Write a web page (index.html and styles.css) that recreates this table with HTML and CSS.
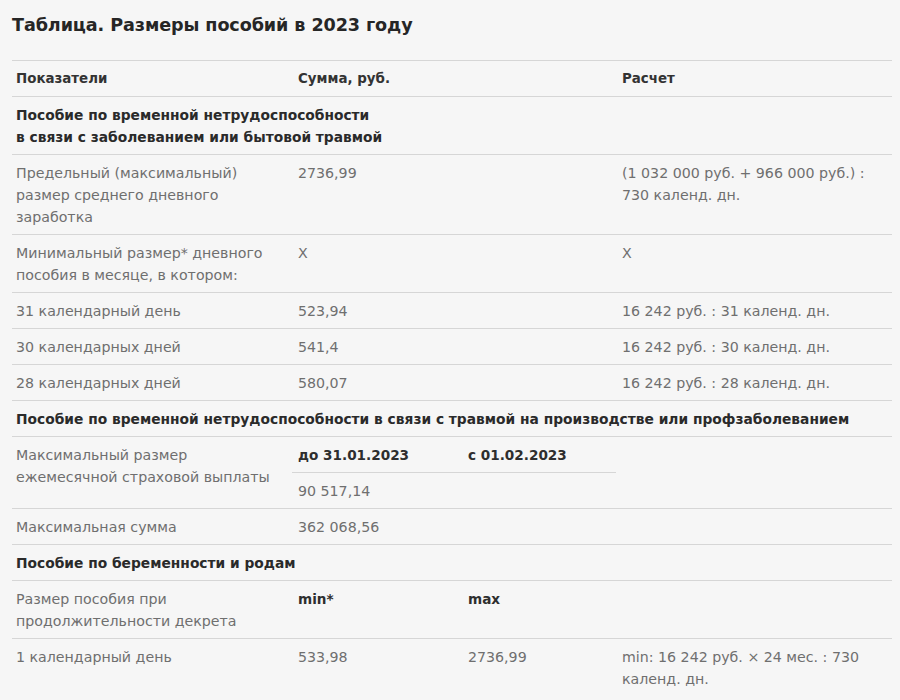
FILE: index.html
```html
<!DOCTYPE html>
<html lang="ru">
<head>
<meta charset="utf-8">
<title>Размеры пособий в 2023 году</title>
<link rel="stylesheet" href="styles.css">
</head>
<body>
<div class="page">
  <h1 class="title">Таблица. Размеры пособий в 2023 году</h1>
  <table class="benefits">
    <colgroup>
      <col class="c-name">
      <col class="c-sum1">
      <col class="c-sum2">
      <col class="c-calc">
    </colgroup>
    <thead>
      <tr class="head">
        <th class="first">Показатели</th>
        <th colspan="2">Сумма, руб.</th>
        <th>Расчет</th>
      </tr>
    </thead>
    <tbody>
      <tr class="section">
        <td colspan="4" class="first">Пособие по временной нетрудоспособности<br>в связи с заболеванием или бытовой травмой</td>
      </tr>
      <tr>
        <td class="first">Предельный (максимальный)<br>размер среднего дневного<br>заработка</td>
        <td colspan="2">2736,99</td>
        <td>(1 032 000 руб. + 966 000 руб.) :<br>730 календ. дн.</td>
      </tr>
      <tr>
        <td class="first">Минимальный размер* дневного<br>пособия в месяце, в котором:</td>
        <td colspan="2">Х</td>
        <td>Х</td>
      </tr>
      <tr>
        <td class="first">31 календарный день</td>
        <td colspan="2">523,94</td>
        <td>16 242 руб. : 31 календ. дн.</td>
      </tr>
      <tr>
        <td class="first">30 календарных дней</td>
        <td colspan="2">541,4</td>
        <td>16 242 руб. : 30 календ. дн.</td>
      </tr>
      <tr>
        <td class="first">28 календарных дней</td>
        <td colspan="2">580,07</td>
        <td>16 242 руб. : 28 календ. дн.</td>
      </tr>
      <tr class="section">
        <td colspan="4" class="first">Пособие по временной нетрудоспособности в связи с травмой на производстве или профзаболеванием</td>
      </tr>
      <tr class="split">
        <td rowspan="2" class="first">Максимальный размер<br>ежемесячной страховой выплаты</td>
        <td class="strong">до 31.01.2023</td>
        <td class="strong">с 01.02.2023</td>
        <td rowspan="2"></td>
      </tr>
      <tr>
        <td>90 517,14</td>
        <td></td>
      </tr>
      <tr>
        <td class="first">Максимальная сумма</td>
        <td colspan="2">362 068,56</td>
        <td></td>
      </tr>
      <tr class="section">
        <td colspan="4" class="first">Пособие по беременности и родам</td>
      </tr>
      <tr>
        <td class="first">Размер пособия при<br>продолжительности декрета</td>
        <td class="strong">min*</td>
        <td class="strong">max</td>
        <td></td>
      </tr>
      <tr class="last">
        <td class="first">1 календарный день</td>
        <td>533,98</td>
        <td>2736,99</td>
        <td>min: 16 242 руб. × 24 мес. : 730<br>календ. дн.</td>
      </tr>
    </tbody>
  </table>
</div>
</body>
</html>
```

FILE: styles.css
```css
html, body {
  margin: 0;
  padding: 0;
  background: #f6f6f6;
}

.page {
  padding: 12px 8px 0 12px;
  font-family: "DejaVu Sans", "Liberation Sans", sans-serif;
}

.title {
  margin: 0 0 22px 0;
  font-size: 17.6px;
  line-height: 26px;
  font-weight: 700;
  color: #262626;
  letter-spacing: -0.1px;
}

.benefits {
  width: 880px;
  border-collapse: collapse;
  table-layout: fixed;
  font-size: 14.2px;
  line-height: 22px;
  color: #6f6f6f;
}

.c-name { width: 280px; }
.c-sum1 { width: 170px; }
.c-sum2 { width: 154px; }
.c-calc { width: 276px; }

.benefits th,
.benefits td {
  padding: 7px 6px 6px 6px;
  text-align: left;
  vertical-align: top;
  border-bottom: 1px solid #d6d6d6;
  white-space: nowrap;
}

.benefits .first {
  padding-left: 4px;
}

.benefits thead th {
  border-top: 1px solid #d6d6d6;
  font-weight: 700;
  font-size: 13.4px;
  color: #333;
}

.section td {
  font-weight: 700;
  font-size: 13.8px;
  color: #2a2a2a;
}

.strong {
  font-weight: 700;
  font-size: 13.6px;
  color: #2e2e2e;
}

.last td {
  border-bottom: none;
}
```
